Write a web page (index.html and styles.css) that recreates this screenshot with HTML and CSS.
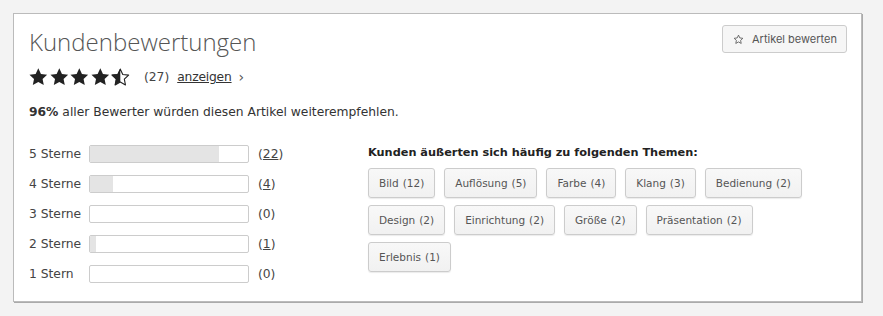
FILE: index.html
```html
<!DOCTYPE html>
<html lang="de">
<head>
<meta charset="utf-8">
<link rel="stylesheet" href="styles.css">
</head>
<body>
<section class="card">
  <header class="head">
    <h2 class="title">Kundenbewertungen</h2>
    <button class="rate-btn"><svg class="rate-star" viewBox="0 0 24 24" width="11" height="11"><path d="M12 2.5l2.9 6.1 6.6.8-4.9 4.6 1.3 6.6L12 17.3l-5.9 3.3 1.3-6.6-4.9-4.6 6.6-.8z" fill="none" stroke="#555" stroke-width="1.8" stroke-linejoin="round"/></svg>Artikel bewerten</button>
  </header>
  <div class="summary">
    <span class="stars">
      <svg viewBox="0 0 24 24"><path d="M12 1.5l3.1 6.6 7.2.9-5.3 5 1.4 7.1L12 17.6l-6.4 3.5 1.4-7.1-5.3-5 7.2-.9z" fill="#222"/></svg>
      <svg viewBox="0 0 24 24"><path d="M12 1.5l3.1 6.6 7.2.9-5.3 5 1.4 7.1L12 17.6l-6.4 3.5 1.4-7.1-5.3-5 7.2-.9z" fill="#222"/></svg>
      <svg viewBox="0 0 24 24"><path d="M12 1.5l3.1 6.6 7.2.9-5.3 5 1.4 7.1L12 17.6l-6.4 3.5 1.4-7.1-5.3-5 7.2-.9z" fill="#222"/></svg>
      <svg viewBox="0 0 24 24"><path d="M12 1.5l3.1 6.6 7.2.9-5.3 5 1.4 7.1L12 17.6l-6.4 3.5 1.4-7.1-5.3-5 7.2-.9z" fill="#222"/></svg>
      <svg viewBox="0 0 24 24"><path d="M12 2.5l2.9 6.2 6.8.8-5 4.7 1.3 6.7L12 17.6l-6 3.3 1.3-6.7-5-4.7 6.8-.8z" fill="none" stroke="#222" stroke-width="1.3" stroke-linejoin="round"/><path d="M12 1.5v16.1l-6.4 3.5 1.4-7.1-5.3-5 7.2-.9z" fill="#222"/></svg>
    </span>
    <span class="count">(27)</span>
    <a class="show" href="#">anzeigen</a><span class="chev">›</span>
  </div>
  <p class="recommend"><b>96%</b> aller Bewerter würden diesen Artikel weiterempfehlen.</p>
  <div class="body">
    <div class="dist">
      <div class="row"><span class="lbl">5 Sterne</span><span class="bar"><span class="fill" style="width:81.5%"></span></span><a class="num" href="#">(<u>22</u>)</a></div>
      <div class="row"><span class="lbl">4 Sterne</span><span class="bar"><span class="fill" style="width:14.8%"></span></span><a class="num" href="#">(<u>4</u>)</a></div>
      <div class="row"><span class="lbl">3 Sterne</span><span class="bar"><span class="fill" style="width:0%"></span></span><span class="num">(0)</span></div>
      <div class="row"><span class="lbl">2 Sterne</span><span class="bar"><span class="fill" style="width:3.7%"></span></span><a class="num" href="#">(<u>1</u>)</a></div>
      <div class="row"><span class="lbl">1 Stern</span><span class="bar"><span class="fill" style="width:0%"></span></span><span class="num">(0)</span></div>
    </div>
    <div class="topics">
      <h3 class="topics-title">Kunden äußerten sich häufig zu folgenden Themen:</h3>
      <div class="tags">
        <span class="tag">Bild <span class="n">(12)</span></span>
        <span class="tag">Auflösung <span class="n">(5)</span></span>
        <span class="tag">Farbe <span class="n">(4)</span></span>
        <span class="tag">Klang <span class="n">(3)</span></span>
        <span class="tag">Bedienung <span class="n">(2)</span></span>
        <span class="tag">Design <span class="n">(2)</span></span>
        <span class="tag">Einrichtung <span class="n">(2)</span></span>
        <span class="tag">Größe <span class="n">(2)</span></span>
        <span class="tag">Präsentation <span class="n">(2)</span></span>
        <span class="tag">Erlebnis <span class="n">(1)</span></span>
      </div>
    </div>
  </div>
</section>
</body>
</html>
```
FILE: styles.css
```css
* { box-sizing: border-box; }
html, body { margin: 0; }
body {
  background: #f3f3f3;
  padding: 13px 21px 0 13px;
  font-family: "DejaVu Sans", sans-serif;
  color: #333;
  width: 883px;
  height: 316px;
}
.card {
  width: 849px;
  height: 289px;
  background: #fff;
  border: 1px solid #bbb;
  box-shadow: 1px 1px 0 #aaa;
  padding: 11px 15px 0 15px;
}
.head {
  display: flex;
  justify-content: space-between;
  align-items: flex-start;
}
.title {
  margin: 0;
  font-family: "Open Sans", sans-serif;
  font-weight: 300;
  font-size: 24px;
  line-height: 34px;
  color: #555;
}
.rate-btn {
  margin-top: 0;
  margin-right: -1px;
  height: 28px;
  padding: 0 9px 0 10px;
  border: 1px solid #ccc;
  border-radius: 3px;
  background: #f6f6f6;
  font-family: "Inter", sans-serif;
  font-size: 11px;
  color: #555;
  display: flex;
  align-items: center;
  gap: 8px;
}
.summary {
  display: flex;
  align-items: center;
  height: 22px;
  margin-top: 7px;
  font-size: 12.3px;
  color: #444;
}
.stars { display: flex; gap: 0; margin-left: -1px; }
.stars svg { display: block; width: 20.6px; height: 20.6px; }
.count { margin-left: 13px; }
.show { margin-left: 8px; color: #333; text-decoration: underline; letter-spacing: -0.2px; }
.chev { margin-left: 7px; font-size: 14px; color: #555; }
.recommend {
  margin: 17px 0 0;
  font-size: 12.3px;
  line-height: 15px;
  color: #333;
}
.recommend b { font-weight: bold; }
.body {
  display: flex;
  margin-top: 25px;
}
.dist { width: 339px; display: flex; flex-direction: column; gap: 12px; }
.row { display: flex; align-items: center; height: 18px; font-size: 12.3px; color: #444; }
.lbl { width: 60px; }
.bar {
  width: 160px;
  height: 18px;
  border: 1px solid #ccc;
  border-radius: 2px;
  background: #fff;
  overflow: hidden;
  display: block;
}
.fill { display: block; height: 100%; background: #e4e4e4; }
.num { margin-left: 9px; color: #444; text-decoration: none; }
.topics { flex: 1; padding-top: 1px; }
.topics-title {
  margin: 0;
  font-size: 11.3px;
  font-weight: bold;
  color: #222;
  line-height: 14px;
}
.tags {
  display: flex;
  flex-wrap: wrap;
  gap: 7px 9px;
  margin-top: 8px;
  width: 440px;
}
.tag {
  height: 30px;
  display: inline-flex;
  align-items: center;
  padding: 0 10px;
  border: 1px solid #ccc;
  border-radius: 3px;
  background: linear-gradient(#f8f8f8, #f1f1f1);
  box-shadow: 0 1px 1px rgba(0,0,0,0.08);
  font-size: 10.5px;
  color: #555;
}
.tag .n { margin-left: 4px; }
```
